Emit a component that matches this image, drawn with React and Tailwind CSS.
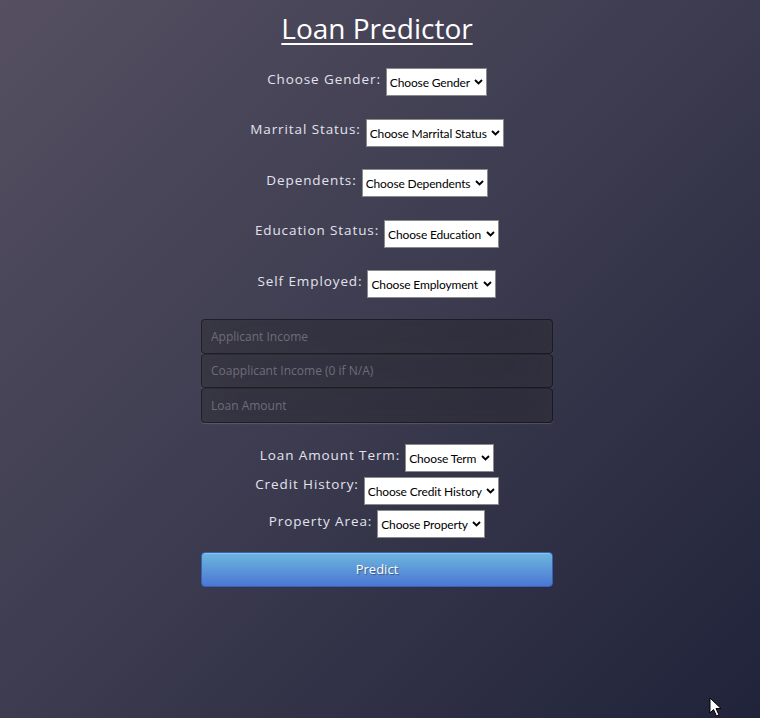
import { useState } from 'react'

const upperFields = [
  { label: 'Choose Gender:', placeholder: 'Choose Gender', width: 'w-[101px]', options: ['Male', 'Female'] },
  { label: 'Marrital Status:', placeholder: 'Choose Marrital Status', width: 'w-[138px]', options: ['Yes', 'No'] },
  { label: 'Dependents:', placeholder: 'Choose Dependents', width: 'w-[126px]', options: ['0', '1', '2', '3+'] },
  { label: 'Education Status:', placeholder: 'Choose Education', width: 'w-[115px]', options: ['Graduate', 'Not Graduate'] },
  { label: 'Self Employed:', placeholder: 'Choose Employment', width: 'w-[129px]', options: ['Yes', 'No'] },
]

const lowerFields = [
  { label: 'Loan Amount Term:', placeholder: 'Choose Term', width: 'w-[89px]', options: ['360', '180', '120'], lift: 'mb-[6px]' },
  { label: 'Credit History:', placeholder: 'Choose Credit History', width: 'w-[135px]', options: ['1', '0'], lift: 'mb-[13px]' },
  { label: 'Property Area:', placeholder: 'Choose Property', width: 'w-[108px]', options: ['Urban', 'Semiurban', 'Rural'], lift: 'mb-[6px]' },
]

function Chevron() {
  return (
    <svg width="9" height="6" viewBox="0 0 9 6" className="pointer-events-none absolute right-[4px] top-1/2 -translate-y-1/2">
      <path d="M1 1 L4.5 4.5 L8 1" fill="none" stroke="#000" strokeWidth="1.9" />
    </svg>
  )
}

function SelectRow({ field, value, onChange, lift = 'mb-[6px]' }) {
  return (
    <div className="flex h-[28px] items-center justify-center gap-[5px]">
      <label className={`${lift} whitespace-nowrap text-[13.5px] tracking-[0.9px] text-[#e2e3ee]`}>
        {field.label}
      </label>
      <div className={`relative ${field.width} h-[28px] shrink-0`}>
        <select
          value={value}
          onChange={(e) => onChange(e.target.value)}
          className="appearance-none w-full h-full bg-white border border-[#8a8a8a] pl-[3px] pr-[11px] pt-[2px] font-['Lato',sans-serif] text-[12px] tracking-[-0.15px] text-black outline-none"
        >
          <option value="">{field.placeholder}</option>
          {field.options.map((o) => (
            <option key={o} value={o}>{o}</option>
          ))}
        </select>
        <Chevron />
      </div>
    </div>
  )
}

export default function App() {
  const [values, setValues] = useState({})
  const setField = (key) => (v) => setValues((prev) => ({ ...prev, [key]: v }))

  const inputClass =
    'w-full h-[34.5px] px-[9px] bg-[rgba(0,0,0,0.25)] border border-[rgba(0,0,0,0.35)] rounded-[4px] text-[12px] text-white placeholder:text-[#6f6c7a] outline-none shadow-[inset_0_-5px_45px_rgba(100,100,100,0.2),0_1px_1px_rgba(255,255,255,0.15)]'

  return (
    <div className="relative h-[718px] w-full overflow-hidden bg-[linear-gradient(135deg,#554f61_0%,#3c3b4f_50%,#20233a_100%)] font-['Open_Sans','Noto_Sans',sans-serif] pr-[6px]">
      <div className="mx-auto w-[352px] pt-[9px]">
        <h1 className="text-center text-[28px] leading-[38px] text-white underline underline-offset-[4px] decoration-[2px]">
          Loan Predictor
        </h1>

        <div className="mt-[21px] flex flex-col">
          {upperFields.map((f) => (
            <div key={f.label} className="h-[50.5px]">
              <SelectRow field={f} value={values[f.label] || ''} onChange={setField(f.label)} />
            </div>
          ))}
        </div>

        <div className="mt-[-1.5px] flex flex-col">
          <input type="text" placeholder="Applicant Income" className={inputClass} />
          <input type="text" placeholder="Coapplicant Income (0 if N/A)" className={inputClass} />
          <input type="text" placeholder="Loan Amount" className={inputClass} />
        </div>

        <div className="mt-[21.5px] flex flex-col gap-[5px]">
          {lowerFields.map((f) => (
            <SelectRow key={f.label} field={f} lift={f.lift} value={values[f.label] || ''} onChange={setField(f.label)} />
          ))}
        </div>

        <button
          type="button"
          className="mt-[14px] w-full h-[35px] rounded-[4px] border border-[#3762bc] bg-[linear-gradient(#6eb6de,#4a77d4)] text-[13px] text-white [text-shadow:1px_1px_1px_rgba(0,0,0,0.4)] shadow-[inset_0_1px_0_rgba(255,255,255,0.2),0_1px_2px_rgba(0,0,0,0.05)]"
        >
          Predict
        </button>
      </div>

      <svg width="14" height="21" viewBox="0 0 14 21" className="absolute left-[709px] top-[697px]">
        <path d="M1 1 L1 16 L4.5 12.5 L7.5 19 L10 18 L7 11.5 L12 11.5 Z" fill="#fff" stroke="#000" strokeWidth="1" />
      </svg>
    </div>
  )
}
